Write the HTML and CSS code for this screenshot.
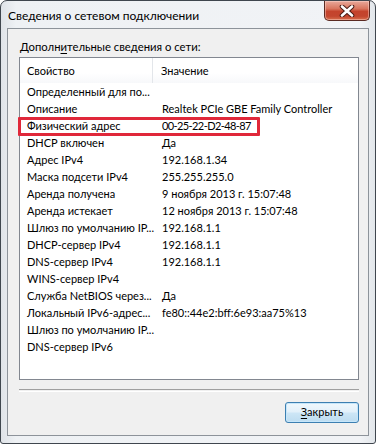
FILE: index.html
```html
<!DOCTYPE HTML>
<html>
<head>
<meta charset="utf-8">
<title>Сведения о сетевом подключении</title>
<link rel="stylesheet" href="styles.css">
</head>
<body>
  <div class="window">
    <div class="titlebar">
      <span class="title">Сведения о сетевом подключении</span>
      <div class="close">
        <!-- white cross with dark outline -->
        <svg width="16" height="12" viewBox="0 0 16 12">
          <path d="M3 1.5 L13 10.5 M13 1.5 L3 10.5" stroke="#4a1b14" stroke-width="4.6" stroke-linecap="round"/>
          <path d="M3 1.5 L13 10.5 M13 1.5 L3 10.5" stroke="#ffffff" stroke-width="2.6" stroke-linecap="round"/>
        </svg>
      </div>
    </div>
    <div class="client">
      <div class="caption">Дополн<u>и</u>тельные сведения о сети:</div>
      <div class="listview">
        <div class="lv-header">
          <div class="hcol prop">Свойство</div>
          <div class="hcol val">Значение</div>
        </div>
        <div class="lv-body">
          <div class="row"><span class="prop">Определенный для по...</span><span class="val"></span></div>
          <div class="row"><span class="prop">Описание</span><span class="val">Realtek PCIe GBE Family Controller</span></div>
          <div class="row"><span class="prop">Физический адрес</span><span class="val mac">00-25-22-D2-48-87</span></div>
          <div class="row"><span class="prop">DHCP включен</span><span class="val">Да</span></div>
          <div class="row"><span class="prop">Адрес IPv4</span><span class="val">192.168.1.34</span></div>
          <div class="row"><span class="prop">Маска подсети IPv4</span><span class="val">255.255.255.0</span></div>
          <div class="row"><span class="prop">Аренда получена</span><span class="val">9 ноября 2013 г. 15:07:48</span></div>
          <div class="row"><span class="prop">Аренда истекает</span><span class="val">12 ноября 2013 г. 15:07:48</span></div>
          <div class="row"><span class="prop">Шлюз по умолчанию IP...</span><span class="val">192.168.1.1</span></div>
          <div class="row"><span class="prop">DHCP-сервер IPv4</span><span class="val">192.168.1.1</span></div>
          <div class="row"><span class="prop">DNS-сервер IPv4</span><span class="val">192.168.1.1</span></div>
          <div class="row"><span class="prop">WINS-сервер IPv4</span><span class="val"></span></div>
          <div class="row"><span class="prop">Служба NetBIOS через...</span><span class="val">Да</span></div>
          <div class="row"><span class="prop">Локальный IPv6-адрес...</span><span class="val">fe80::44e2:bff:6e93:aa75%13</span></div>
          <div class="row"><span class="prop">Шлюз по умолчанию IP...</span><span class="val"></span></div>
          <div class="row"><span class="prop">DNS-сервер IPv6</span><span class="val"></span></div>
        </div>
        <!-- red marker drawn over the MAC address row -->
        <div class="marker"></div>
      </div>
      <div class="separator"></div>
      <div class="buttons">
        <div class="btn"><u>З</u>акрыть</div>
      </div>
    </div>
  </div>
</body>
</html>
```

FILE: styles.css
```css
/* whole page is one Windows 7 style dialog */
body {
    margin: 0;
    background: #ffffff;
    font-family: Lato, "Noto Sans", sans-serif;
    font-size: 11px;
    color: #000;
}
.window {
    box-sizing: border-box;
    width: 376px; height: 444px;
    border: 1px solid #3f464e;
    border-radius: 7px 7px 3px 3px;
    padding: 0 6px 7px 6px;
    background: linear-gradient(to right, #dfe3e8 0%, #eef1f4 4%, #f1f3f6 96%, #e2e6ea 100%);
    display: flex; flex-direction: column;
}
.titlebar {
    height: 27px;
    display: flex; justify-content: space-between; align-items: flex-start;
    padding-left: 1px;
}
.title {
    font-size: 12px;
    line-height: 15px;
    margin-top: 7px;
    color: #000;
}
.close {
    width: 46px; height: 20px;
    margin-right: -1px;
    box-sizing: border-box;
    border: 1px solid #5a2a22;
    border-top: none;
    border-radius: 0 0 5px 5px;
    background: linear-gradient(#e9a99b 0%, #d9765f 40%, #c4432c 55%, #c3452e 80%, #d8704e 100%);
    box-shadow: inset 0 0 0 1px rgba(255, 220, 210, 0.45);
    display: flex; align-items: center; justify-content: center;
}
.close svg { display: block; }
.client {
    flex: 1;
    border: 1px solid #8d939a;
    background: #f0f0f0;
    padding-top: 10px;
    display: flex; flex-direction: column;
}
.caption {
    padding-left: 12px;
    line-height: 15px;
    font-size: 11.3px;
}
.caption u, .btn u { text-decoration-thickness: 1px; text-underline-offset: 2px; }
.listview {
    position: relative;
    box-sizing: border-box;
    margin: 3px 0 0 11px;
    width: 340px; height: 323px;
    border: 1px solid #828790;
    background: #fff;
}
.lv-header {
    display: flex;
    height: 25px;
    background: linear-gradient(#ffffff, #ffffff 60%, #f7f8fa);
}
.hcol {
    line-height: 25px;
    box-sizing: border-box;
}
.hcol.prop { width: 133px; padding-left: 7px; border-right: 1px solid #e3e6ea; }
.hcol.val { padding-left: 8px; }
.row {
    display: flex;
    height: 17px;
    line-height: 17px;
    white-space: nowrap;
}
.row .prop { width: 134px; flex: none; box-sizing: border-box; padding-left: 7px; }
.row .val { padding-left: 8px; }
.row .mac { letter-spacing: -0.6px; }
.marker {
    position: absolute;
    left: -2px; top: 59px;
    width: 242px; height: 19px;
    box-sizing: border-box;
    border: 3px solid #e0283a;
    border-radius: 1px;
}
.separator {
    margin: 9px 9px 0 11px;
    height: 1px;
    border-top: 1px solid #a0a0a0;
    border-bottom: 1px solid #ffffff;
}
.buttons {
    display: flex; justify-content: flex-end;
    margin: 10px 9px 0 0;
}
.btn {
    box-sizing: border-box;
    width: 74px; height: 21px;
    border: 1px solid #3c7fb1;
    border-radius: 3px;
    background: linear-gradient(#f0f8fd 0%, #e2f0fa 48%, #cde6f6 52%, #bddcf0 100%);
    box-shadow: inset 0 0 0 1px #c6e6fa;
    text-align: center;
    line-height: 18px;
}
```
